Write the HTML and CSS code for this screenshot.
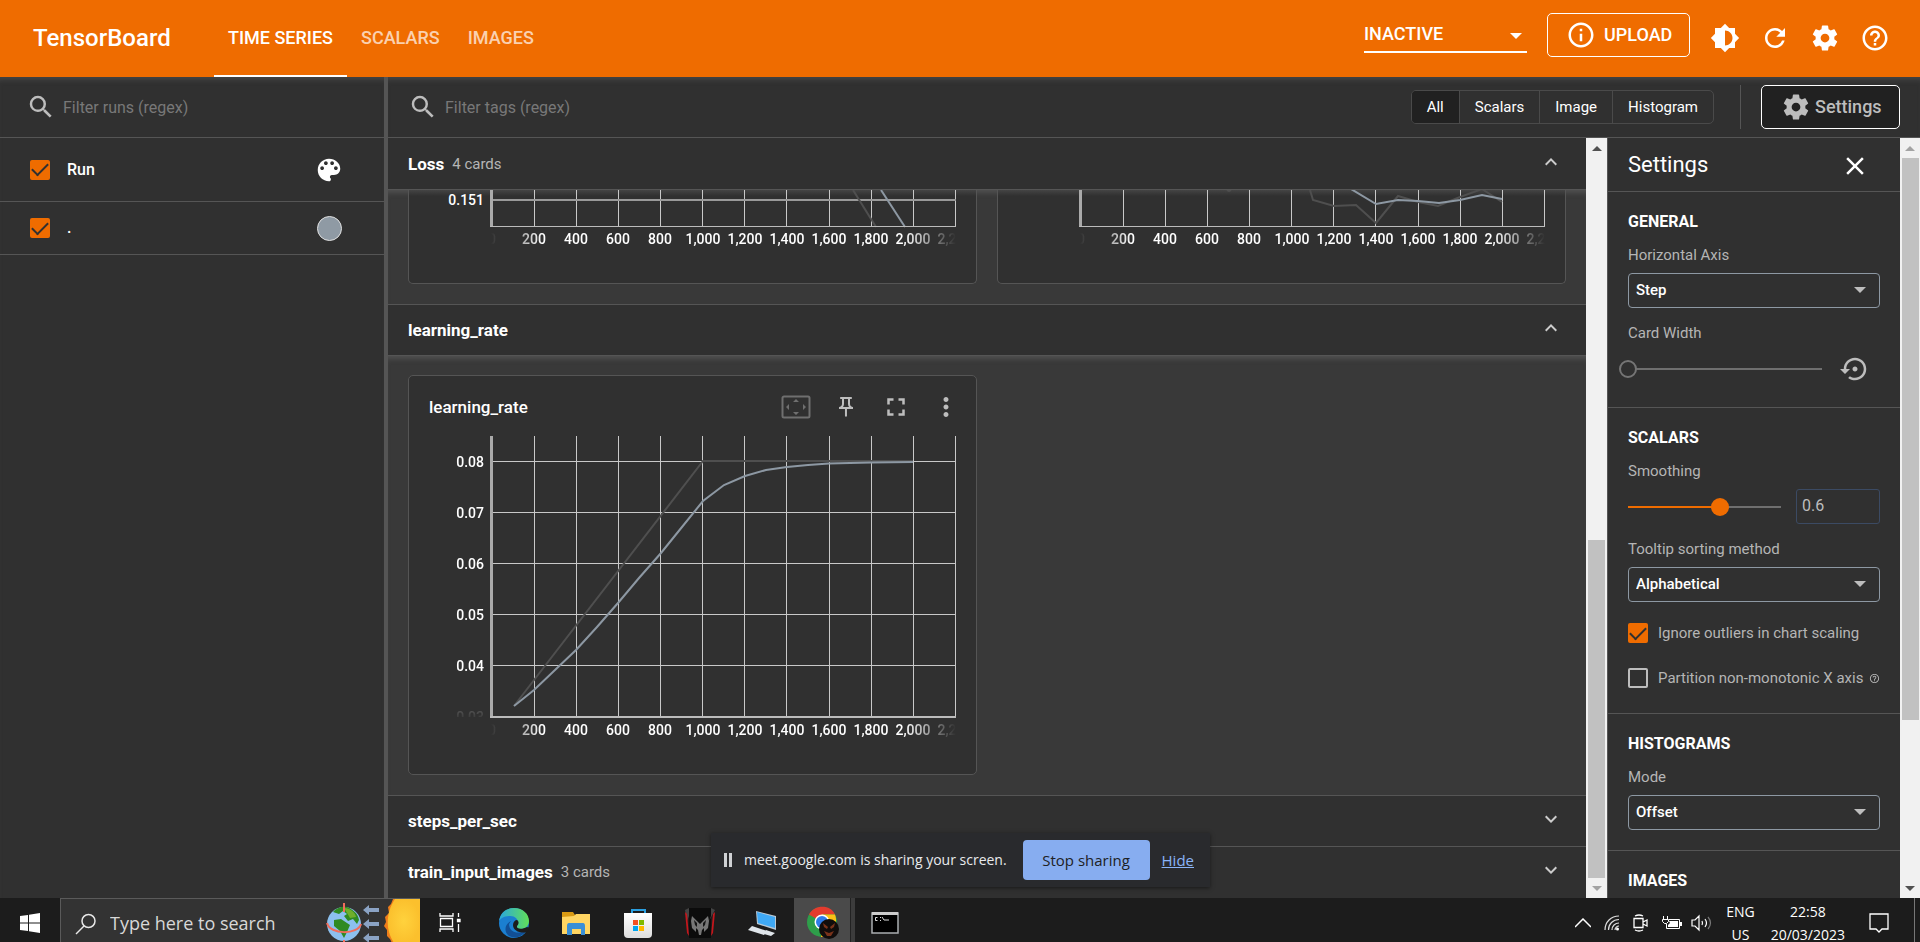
FILE: index.html
```html
<!DOCTYPE html>
<html lang="en">
<head>
<meta charset="utf-8">
<title>TensorBoard</title>
<link rel="stylesheet" href="styles.css">
</head>
<body>
<svg class="defs" width="0" height="0" aria-hidden="true">
  <defs>
    <linearGradient id="fade-x"><stop offset="0" stop-color="#000"/><stop offset=".11" stop-color="#fff"/><stop offset=".89" stop-color="#fff"/><stop offset="1" stop-color="#000"/></linearGradient>
    <linearGradient id="fade-y" x1="0" y1="0" x2="0" y2="1"><stop offset="0" stop-color="#fff"/><stop offset=".9" stop-color="#fff"/><stop offset="1" stop-color="#222"/></linearGradient>
    <mask id="mask-x" maskUnits="userSpaceOnUse" x="82" y="-20" width="465" height="30"><rect x="82" y="-20" width="465" height="30" fill="url(#fade-x)"/></mask>
    <mask id="mask-y" maskUnits="userSpaceOnUse" x="0" y="0" width="80" height="286"><rect x="0" y="0" width="80" height="286" fill="url(#fade-y)"/></mask>
    <linearGradient id="edge-a" x1="0" y1="0" x2="1" y2="0"><stop offset="0" stop-color="#2aa7de"/><stop offset="1" stop-color="#61df58"/></linearGradient>
    <linearGradient id="store-a" x1="0" y1="0" x2="0" y2="1"><stop offset="0" stop-color="#fff"/><stop offset="1" stop-color="#ddd"/></linearGradient>
    <radialGradient id="sun-a"><stop offset="0" stop-color="#ffd23d"/><stop offset="1" stop-color="#fbc02d"/></radialGradient>
    <symbol id="i-search" viewBox="0 0 24 24"><path d="M15.5 14h-.79l-.28-.27A6.47 6.47 0 0 0 16 9.5 6.5 6.5 0 1 0 9.5 16c1.61 0 3.09-.59 4.23-1.57l.27.28v.79l5 4.99L20.49 19l-4.99-5zm-6 0C7.01 14 5 11.99 5 9.5S7.01 5 9.5 5 14 7.01 14 9.5 11.99 14 9.5 14z"/></symbol>
    <symbol id="i-gear" viewBox="0 0 24 24"><path d="M19.43 12.98c.04-.32.07-.64.07-.98s-.03-.66-.07-.98l2.11-1.65c.19-.15.24-.42.12-.64l-2-3.46c-.12-.22-.39-.3-.61-.22l-2.49 1c-.52-.4-1.08-.73-1.69-.98l-.38-2.65C14.46 2.18 14.25 2 14 2h-4c-.25 0-.46.18-.49.42l-.38 2.65c-.61.25-1.17.59-1.69.98l-2.49-1c-.23-.09-.49 0-.61.22l-2 3.46c-.13.22-.07.49.12.64l2.11 1.65c-.04.32-.07.65-.07.98s.03.66.07.98l-2.11 1.65c-.19.15-.24.42-.12.64l2 3.46c.12.22.39.3.61.22l2.49-1c.52.4 1.08.73 1.69.98l.38 2.65c.03.24.24.42.49.42h4c.25 0 .46-.18.49-.42l.38-2.65c.61-.25 1.17-.59 1.69-.98l2.49 1c.23.09.49 0 .61-.22l2-3.46c.12-.22.07-.49-.12-.64l-2.11-1.65zM12 15.5c-1.93 0-3.5-1.57-3.5-3.5s1.57-3.5 3.5-3.5 3.5 1.57 3.5 3.5-1.57 3.5-3.5 3.5z"/></symbol>
    <symbol id="i-help" viewBox="0 0 24 24"><path d="M11 18h2v-2h-2v2zm1-16C6.48 2 2 6.48 2 12s4.48 10 10 10 10-4.48 10-10S17.52 2 12 2zm0 18c-4.41 0-8-3.59-8-8s3.59-8 8-8 8 3.59 8 8-3.59 8-8 8zm0-14c-2.21 0-4 1.79-4 4h2c0-1.1.9-2 2-2s2 .9 2 2c0 2-3 1.75-3 5h2c0-2.25 3-2.5 3-5 0-2.21-1.79-4-4-4z"/></symbol>
    <symbol id="i-up" viewBox="0 0 24 24"><path d="M12 8l-6 6 1.41 1.41L12 10.83l4.59 4.58L18 14z"/></symbol>
    <symbol id="i-down" viewBox="0 0 24 24"><path d="M16.59 8.59L12 13.17 7.41 8.59 6 10l6 6 6-6z"/></symbol>
  </defs>
</svg>

<header class="topbar">
  <h1 class="brand">TensorBoard</h1>
  <nav class="tabs">
    <button class="tab tab-active">TIME SERIES</button>
    <button class="tab">SCALARS</button>
    <button class="tab">IMAGES</button>
  </nav>
  <div class="top-actions">
    <span class="inactive"><select aria-label="Inactive dashboards"><option>INACTIVE</option></select></span>
    <button class="upload">
      <svg class="icon-30" viewBox="0 0 24 24"><path d="M11 7h2v2h-2zm0 4h2v6h-2zm1-9C6.48 2 2 6.48 2 12s4.48 10 10 10 10-4.48 10-10S17.52 2 12 2zm0 18c-4.41 0-8-3.59-8-8s3.59-8 8-8 8 3.59 8 8-3.59 8-8 8z"/></svg>
      UPLOAD
    </button>
    <div class="top-icons">
      <button aria-label="Theme"><svg class="icon-30" viewBox="0 0 24 24"><path d="M20 15.31L23.31 12 20 8.69V4h-4.69L12 .69 8.69 4H4v4.69L.69 12 4 15.31V20h4.69L12 23.31 15.31 20H20v-4.69zM12 18V6c3.31 0 6 2.69 6 6s-2.69 6-6 6z"/></svg></button>
      <button aria-label="Refresh"><svg class="icon-30" viewBox="0 0 24 24"><path d="M17.65 6.35A7.958 7.958 0 0 0 12 4c-4.42 0-7.99 3.58-8 8s3.57 8 8 8c3.73 0 6.84-2.55 7.73-6h-2.08A5.99 5.99 0 0 1 12 18c-3.31 0-6-2.69-6-6s2.69-6 6-6c1.66 0 3.14.69 4.22 1.78L13 11h7V4l-2.35 2.35z"/></svg></button>
      <button aria-label="Settings"><svg class="icon-30"><use href="#i-gear"/></svg></button>
      <button aria-label="Help"><svg class="icon-30"><use href="#i-help"/></svg></button>
    </div>
  </div>
</header>

<div class="workspace">
  <aside class="runs">
    <label class="filter"><svg class="icon-30"><use href="#i-search"/></svg><input type="text" placeholder="Filter runs (regex)"></label>
    <div class="run-row run-head">
      <input type="checkbox" id="run-all" checked><label for="run-all">Run</label>
      <button aria-label="Color runs"><svg class="icon-30" viewBox="0 0 24 24"><path d="M12 3c-4.97 0-9 4.03-9 9s4.03 9 9 9c.83 0 1.5-.67 1.5-1.5 0-.39-.15-.74-.39-1.01-.23-.26-.38-.61-.38-.99 0-.83.67-1.5 1.5-1.5H16c2.76 0 5-2.24 5-5 0-4.42-4.03-8-9-8zm-5.5 9c-.83 0-1.5-.67-1.5-1.5S5.67 9 6.5 9 8 9.67 8 10.5 7.33 12 6.5 12zm3-4C8.67 8 8 7.33 8 6.5S8.67 5 9.5 5s1.5.67 1.5 1.5S10.33 8 9.5 8zm5 0c-.83 0-1.5-.67-1.5-1.5S13.67 5 14.5 5s1.5.67 1.5 1.5S15.33 8 14.5 8zm3 4c-.83 0-1.5-.67-1.5-1.5S16.67 9 17.5 9s1.5.67 1.5 1.5-.67 1.5-1.5 1.5z"/></svg></button>
    </div>
    <div class="run-row">
      <input type="checkbox" id="run-dot" checked><label for="run-dot">.</label>
      <button class="swatch" aria-label="Run color"></button>
    </div>
  </aside>

  <main class="main">
    <div class="toolbar">
      <label class="filter"><svg class="icon-30"><use href="#i-search"/></svg><input type="text" placeholder="Filter tags (regex)"></label>
      <div class="toggle">
        <button class="on">All</button><button>Scalars</button><button>Image</button><button>Histogram</button>
      </div>
      <div class="settings-slot"><button class="settings-btn"><svg class="icon-30"><use href="#i-gear"/></svg>Settings</button></div>
    </div>

    <div class="columns">
      <div class="groups">
        <section>
          <button class="group-head first"><strong>Loss</strong><small>4 cards</small><svg class="icon-24"><use href="#i-up"/></svg></button>
          <div class="group-body cropped">
            <article class="card">
              <svg class="chart" viewBox="0 0 567 93">
                <path class="grid" d="M125.500 0V37M167.500 0V37M209.500 0V37M251.500 0V37M293.500 0V37M335.500 0V37M377.500 0V37M420.500 0V37M462.500 0V37M504.500 0V37M546.500 0V37"/>
                <path class="grid-wide" d="M82 10H547"/>
                <path class="raw" d="M444 0L467 37"/><path class="smooth" d="M472 0L496 37"/>
                <path class="axis-y" d="M82.500 0V37"/><path class="axis-x" d="M81 36.500H547"/>
                <text class="tick end" x="75" y="15">0.151</text>
                <g transform="translate(0 54)"><g class="xticks" mask="url(#mask-x)"><text x="83" y="0">0</text><text x="125" y="0">200</text><text x="167" y="0">400</text><text x="209" y="0">600</text><text x="251" y="0">800</text><text x="294" y="0">1,000</text><text x="336" y="0">1,200</text><text x="378" y="0">1,400</text><text x="420" y="0">1,600</text><text x="462" y="0">1,800</text><text x="504" y="0">2,000</text><text x="546" y="0">2,200</text></g></g>
              </svg>
            </article>
            <article class="card">
              <svg class="chart" viewBox="0 0 567 93">
                <path class="grid" d="M125.500 0V37M167.500 0V37M209.500 0V37M251.500 0V37M293.500 0V37M335.500 0V37M377.500 0V37M420.500 0V37M462.500 0V37M504.500 0V37M546.500 0V37"/>
                <path class="raw" d="M312 0L315 10L336 16L358 15L378 33L400 6L420 12L440 16L462 7L484 -1L504 12M229 0L231 1L233 0"/><path class="smooth" d="M353 -1L378 14L400 10L420 11L441 13L462 10L484 5L504 9"/>
                <path class="axis-y" d="M82.500 0V37"/><path class="axis-x" d="M81 36.500H547"/>
                <g transform="translate(0 54)"><g class="xticks" mask="url(#mask-x)"><text x="83" y="0">0</text><text x="125" y="0">200</text><text x="167" y="0">400</text><text x="209" y="0">600</text><text x="251" y="0">800</text><text x="294" y="0">1,000</text><text x="336" y="0">1,200</text><text x="378" y="0">1,400</text><text x="420" y="0">1,600</text><text x="462" y="0">1,800</text><text x="504" y="0">2,000</text><text x="546" y="0">2,200</text></g></g>
              </svg>
            </article>
          </div>
        </section>

        <section>
          <button class="group-head"><strong>learning_rate</strong><svg class="icon-24"><use href="#i-up"/></svg></button>
          <div class="group-body">
            <article class="card">
              <div class="card-head">
                <h2>learning_rate</h2>
                <button class="dim" aria-label="Fit domain"><svg class="icon-30" viewBox="0 0 30 30"><path fill="none" stroke="currentColor" stroke-width="2" d="M3 4.500h24a1.500 1.500 0 0 1 1.500 1.500v18a1.500 1.500 0 0 1-1.500 1.500H3A1.500 1.500 0 0 1 1.500 24V6A1.500 1.500 0 0 1 3 4.500z"/><path d="M15 7l3 3h-6zM15 23l3-3h-6zM5 15l3-3v6zM25 15l-3-3v6z"/></svg></button>
                <button aria-label="Pin card"><svg class="icon-24" viewBox="0 0 24 24"><path d="M14 4v5c0 1.12.37 2.160 1 3H9c.65-.86 1-1.900 1-3V4h4m3-2H7c-.55 0-1 .45-1 1s.45 1 1 1h1v5c0 1.660-1.340 3-3 3v2h5.970v7l1 1 1-1v-7H19v-2c-1.660 0-3-1.340-3-3V4h1c.55 0 1-.45 1-1s-.45-1-1-1z"/></svg></button>
                <button aria-label="Fullscreen"><svg class="icon-30" viewBox="0 0 24 24"><path d="M7 14H5v5h5v-2H7v-3zm-2-4h2V7h3V5H5v5zm12 7h-3v2h5v-5h-2v3zM14 5v2h3v3h2V5h-5z"/></svg></button>
                <button aria-label="More"><svg class="icon-30" viewBox="0 0 24 24"><path d="M12 8c1.100 0 2-.9 2-2s-.9-2-2-2-2 .9-2 2 .9 2 2 2zm0 2c-1.100 0-2 .9-2 2s.9 2 2 2 2-.9 2-2-.9-2-2-2zm0 6c-1.100 0-2 .9-2 2s.9 2 2 2 2-.9 2-2-.9-2-2-2z"/></svg></button>
              </div>
              <svg class="chart" viewBox="0 0 567 343">
                <path class="grid" d="M125.500 5V286M167.500 5V286M209.500 5V286M251.500 5V286M293.500 5V286M335.500 5V286M377.500 5V286M420.500 5V286M462.500 5V286M504.500 5V286M546.500 5V286M82 30.500H547M82 81.500H547M82 132.500H547M82 183.500H547M82 234.500H547"/>
                <path class="raw" d="M105 275L294 30L504 30"/>
                <path class="smooth" d="M105 275L125 259L146 239L167 219L188 196L209 172L230 147L252 122L273 96L294 70L315 54L336 45L357 39L378 36L399 34L420 32.500L462 31.500L504 31"/>
                <path class="axis-y" d="M82.500 5V287"/><path class="axis-x wide" d="M81 286H547"/>
                <g class="yticks" mask="url(#mask-y)"><text x="75" y="36">0.08</text><text x="75" y="87">0.07</text><text x="75" y="138">0.06</text><text x="75" y="189">0.05</text><text x="75" y="240">0.04</text><text x="75" y="291" opacity=".5">0.03</text></g>
                <g transform="translate(0 304)"><g class="xticks" mask="url(#mask-x)"><text x="83" y="0">0</text><text x="125" y="0">200</text><text x="167" y="0">400</text><text x="209" y="0">600</text><text x="251" y="0">800</text><text x="294" y="0">1,000</text><text x="336" y="0">1,200</text><text x="378" y="0">1,400</text><text x="420" y="0">1,600</text><text x="462" y="0">1,800</text><text x="504" y="0">2,000</text><text x="546" y="0">2,200</text></g></g>
              </svg>
            </article>
          </div>
        </section>

        <button class="group-head"><strong>steps_per_sec</strong><svg class="icon-24"><use href="#i-down"/></svg></button>
        <button class="group-head"><strong>train_input_images</strong><small>3 cards</small><svg class="icon-24"><use href="#i-down"/></svg></button>
      </div>
      <div class="scrollbar"><i class="arrow up"></i><i class="gap-top-main"></i><i class="thumb thumb-main"></i><i class="arrow down faint"></i></div>

      <aside class="settings">
        <div class="settings-head"><h2>Settings</h2><button aria-label="Close"><svg class="icon-30" viewBox="0 0 24 24"><path d="M19 6.410L17.590 5 12 10.590 6.410 5 5 6.410 10.590 12 5 17.590 6.410 19 12 13.410 17.590 19 19 17.590 13.410 12z"/></svg></button></div>
        <section class="set-block">
          <h3>GENERAL</h3>
          <label class="name" for="haxis">Horizontal Axis</label>
          <span class="select"><select id="haxis"><option>Step</option></select></span>
          <label class="name" for="cwidth">Card Width</label>
          <div class="slider-row"><input class="range empty" id="cwidth" type="range" min="0" max="100" value="0">
            <button aria-label="Reset width"><svg class="icon-30" viewBox="0 0 24 24"><path d="M14 12c0-1.100-.9-2-2-2s-2 .9-2 2 .9 2 2 2 2-.9 2-2zm-2-9c-4.970 0-9 4.030-9 9H0l4 4 4-4H5c0-3.870 3.130-7 7-7s7 3.130 7 7-3.130 7-7 7c-1.510 0-2.910-.49-4.060-1.300l-1.420 1.440C8.040 20.300 9.940 21 12 21c4.970 0 9-4.030 9-9s-4.030-9-9-9z"/></svg></button></div>
        </section>
        <section class="set-block">
          <h3>SCALARS</h3>
          <label class="name" for="smooth">Smoothing</label>
          <div class="smooth-row"><input class="range" id="smooth" type="range" min="0" max="1" step="0.1" value="0.6"><input class="num" type="text" value="0.6" aria-label="Smoothing value"></div>
          <label class="name" for="sorting">Tooltip sorting method</label>
          <span class="select"><select id="sorting"><option>Alphabetical</option></select></span>
          <div class="check-row"><input type="checkbox" id="outliers" checked><label for="outliers">Ignore outliers in chart scaling</label></div>
          <div class="check-row"><input type="checkbox" id="partition"><label for="partition">Partition non-monotonic X axis</label><svg class="icon-11"><use href="#i-help"/></svg></div>
        </section>
        <section class="set-block">
          <h3>HISTOGRAMS</h3>
          <label class="name" for="mode">Mode</label>
          <span class="select"><select id="mode"><option>Offset</option></select></span>
        </section>
        <section class="set-block"><h3>IMAGES</h3></section>
      </aside>
      <div class="scrollbar"><i class="arrow up faint"></i><i class="thumb thumb-settings"></i><i class="gap-bottom"></i><i class="arrow down"></i></div>
    </div>
  </main>
</div>

<div class="share">
  <i class="pause"></i><span>meet.google.com is sharing your screen.</span>
  <button>Stop sharing</button><a href="#">Hide</a>
</div>

<footer class="taskbar">
  <button class="start" aria-label="Start"><svg width="20" height="20" viewBox="0 0 20 20"><path fill="#fff" d="M0 3l8-1v7.500H0zM9 1.800L20 0v9.500H9zM0 10.500h8V18l-8-1zM9 10.500h11V20L9 18.200z"/></svg></button>
  <div class="win-search">
    <svg width="22" height="22" viewBox="0 0 22 22" fill="none" stroke="#e8e8e8" stroke-width="1.500"><circle cx="13.500" cy="8" r="6.500"/><path d="M9 13L1 21"/></svg>
    <input type="text" placeholder="Type here to search" aria-label="Type here to search">
    <svg class="weather" width="96" height="44" viewBox="0 0 96 44"><circle cx="20" cy="25" r="17" fill="#8cc0ee"/><path fill="#2f8a22" d="M9 13c3-4 9-6 14-5 5 2 11 6 12 13l-2 4-4-5-5 2-4-5 3-2-4-3-4 3zM10 21l7-1 9 6-3 7-3 6-4-7-6-5z"/><path fill="#6fae2b" d="M20 9c6 0 11 4 12 9l-6 1-3-5z"/><path fill="none" stroke="#f26d5b" stroke-width="2" d="M20 4v9M20 41v3M3 24c3 12 31 12 34 1"/><path fill="#8ba3c4" d="M39 11l6-5v3h10v4H45v3zM39 25l6-5v3h10v4H45v3zM39 39l6-5v3h10v4H45v3z"/><path fill="#ef7d1a" d="M69 0l-2 5-3 3 1 6-4 4 1 5-2 4 3 4v6l3 3 2 4h28V0z"/><path fill="url(#sun-a)" d="M71 0c-9 13-10 31-1 44h26V0z"/></svg>
  </div>
  <div class="apps">
    <button aria-label="Task view"><svg width="24" height="22" viewBox="0 0 24 22" fill="none" stroke="#fff" stroke-width="1.300"><path d="M2 1v3h13V1M2 20v-3h13v3M2.500 6.500h12v8h-12zM20.500 1v4M20.500 12v8"/><path fill="#fff" d="M19.500 7.500h2.500v2h-2.500z"/></svg></button>
    <button aria-label="Edge"><svg width="32" height="32" viewBox="0 0 32 32"><circle cx="16" cy="16" r="15" fill="#1b7fd0"/><path fill="url(#edge-a)" d="M1 14C2 6 8 1 16 1c9 0 15 6 15 13 0 5-4 8-8 8-3 0-5-1-4-3 3-5-1-11-8-10-5 0-9 3-10 5z"/><path fill="#124f96" d="M11 17c0 7 7 11 17 7-4 6-11 8-17 5-5-4-5-11 2-15z"/><path fill="#1c1c1c" d="M19 13c3 2 1 5 0 6-1 3 5 4 10 1l3 1-3 4c-6 2-14-1-14-7 0-3 2-5 4-5z"/></svg></button>
    <button aria-label="File Explorer"><svg width="28" height="24" viewBox="0 0 28 24"><path fill="#d99a13" d="M0 1h11l2 3v5H0z"/><path fill="#ffd562" d="M0 6l12-1 2-2h14v20H0z"/><path fill="#3a8fd6" d="M7 12h14q2 0 2 3v9h-4v-6h-9v6H5v-9q0-3 2-3z"/></svg></button>
    <button aria-label="Store"><svg width="30" height="30" viewBox="0 0 30 30"><path fill="none" stroke="#2a9fe0" stroke-width="2" d="M9 7V2h13v5"/><path fill="url(#store-a)" d="M1 5h28v21q0 4-4 4H5q-4 0-4-4z"/><path fill="#f25022" d="M10 12h5v5h-5z"/><path fill="#7fba00" d="M16 12h5v5h-5z"/><path fill="#00a4ef" d="M10 18h5v5h-5z"/><path fill="#ffb900" d="M16 18h5v5h-5z"/></svg></button>
    <button aria-label="PredatorSense"><svg width="30" height="30" viewBox="0 0 30 30"><path fill="#0c0c0c" d="M4 0h22v30H4z"/><path fill="#444" d="M0 2l4-2v8l-2 5zM30 2l-4-2v8l-2 5z"/><path fill="#c4161c" d="M0 4l2 2 2 22-2-3zM30 4l-2 2-2 22 2-3z"/><path fill="#777" d="M7 8l5 5 3 3 3-3 5-5 1 5-1 7-4 4v-4l-2 2-1 5h-2l-1-5-2-2v4l-4-4-1-7z"/><path fill="#151515" d="M9 12l3 3v4l-2-2zM21 12l-3 3v4l2-2z"/></svg></button>
    <button aria-label="Remote desktop"><svg width="28" height="28" viewBox="0 0 28 28"><path fill="#b9c8d4" d="M8 2l20 5v14L9 15z"/><path fill="#3fa9f5" d="M9 3l18 5v11L10 14z"/><path fill="#dfe5ea" d="M4 17l15 5-3 4L0 21zM18 21l9 3-4 3-7-2z"/></svg></button>
    <button class="active" aria-label="Chrome"><svg width="34" height="34" viewBox="0 0 34 34"><circle cx="17" cy="16" r="15" fill="#2e9e4a"/><path fill="#e33b2e" d="M17 16L4 8.500C9-2 26-2 30 8.500H17z"/><path fill="#fbc116" d="M17 8.500h13c4 11-4 23-14 22.500z"/><circle cx="17" cy="16" r="7.500" fill="#fff"/><circle cx="17" cy="16" r="6" fill="#2f7de9"/><circle cx="24" cy="23" r="10" fill="#110d0c"/><path fill="#7a331a" d="M18 17l5 4-1 2-3-2zM30 17l-5 4 1 2 3-2zM19 25l5 2 5-2-3 5h-4z"/></svg></button>
    <button class="stack" aria-label="Chrome windows"></button>
    <button aria-label="Command Prompt"><svg width="28" height="24" viewBox="0 0 28 24"><path fill="#000" stroke="#a9adb0" stroke-width="1.500" d="M1 2h26v20H1z"/><path fill="#ccc" d="M1 1h26v3H1z"/><path fill="none" stroke="#ddd" d="M6.500 6.500h-2v3h2M9.500 6v1M9.500 9v1M11 6l2 3h5"/></svg></button>
  </div>
  <div class="tray">
    <svg width="16" height="10" viewBox="0 0 16 10" fill="none" stroke="#fff" stroke-width="1.500"><path d="M0 9l8-8 8 8"/></svg>
    <svg width="16" height="16" viewBox="0 0 16 16" fill="none" stroke="#ddd" stroke-width="1.200"><path d="M1 15C1 7 7 1 15 1M4.500 15C4.500 9 9 4.500 15 4.500M8 15c0-4 3-7 7-7M11 15c0-2 2-4 4-4"/><circle cx="13.500" cy="14" r="1.500" fill="#fff" stroke="none"/></svg>
    <svg width="16" height="18" viewBox="0 0 16 18" fill="none" stroke="#fff" stroke-width="1.300"><path d="M1 4.500h9v9H1zM10 8l4-2v6l-4-2M2 2q4-2 8 0M2 16q4 2 8 0"/></svg>
    <svg width="20" height="14" viewBox="0 0 20 14"><path fill="none" stroke="#fff" d="M4.500 8v4.500h13v-9H7M1.500 0v3M5.500 0v3M0.500 3.500h6v2l-2 2h-2l-2-2z"/><path fill="#fff" d="M7 5h9v6H6V9l2-2zM18 6h2v4h-2z"/></svg>
    <svg class="speaker" width="22" height="18" viewBox="0 0 22 18" fill="none" stroke="#fff" stroke-width="1.200"><path d="M1 6h3l4-4v14l-4-4H1zM11 7q1 2 0 4M14 5q3 4 0 8"/><path stroke="#777" d="M17 3q5 6 0 12"/></svg>
    <div class="lang"><span>ENG</span><span>US</span></div>
    <div class="clock"><span>22:58</span><span>20/03/2023</span></div>
    <svg width="20" height="21" viewBox="0 0 20 21" fill="none" stroke="#fff" stroke-width="1.300"><path d="M1 1h18v15h-6l-3 3-3-3H1z"/></svg>
  </div>
</footer>
</body>
</html>
```
FILE: styles.css
```css
* { box-sizing: border-box; }
body {
  margin: 0;
  height: 100vh;
  display: flex;
  flex-direction: column;
  overflow: hidden;
  background: #303030;
  color: #fff;
  font: 400 15px/20px Roboto, sans-serif;
}
button, input, select { font: inherit; color: inherit; }
button { margin: 0; padding: 0; border: 0; background: none; display: flex; align-items: center; }
h1, h2, h3 { margin: 0; }
svg { display: block; flex: none; }
svg:not([fill]) { fill: currentColor; }
.defs { position: absolute; }
.icon-30 { width: 30px; height: 30px; }
.icon-24 { width: 24px; height: 24px; }
.icon-11 { width: 11px; height: 11px; }

/* top bar */
.topbar { flex: none; height: 77px; display: flex; align-items: stretch; background: #ef6c00; padding: 0 30px 0 33px; }
.brand { align-self: center; width: 181px; padding-bottom: 2px; font-size: 24px; font-weight: 500; line-height: 30px; }
.tabs { display: flex; }
.tab { padding: 0 14px; font-size: 18px; font-weight: 500; color: rgba(255,255,255,.7); border-bottom: 2px solid transparent; }
.tab-active { color: #fff; border-color: #fff; }
.top-actions { margin-left: auto; display: flex; align-items: flex-start; padding-top: 13px; }
.inactive { position: relative; width: 163px; height: 40px; margin-right: 20px; border-bottom: 2px solid #fff; }
.inactive select { display: block; width: 100%; height: 38px; padding: 3px 0 0; border: 0; background: none; appearance: none; font-size: 18px; line-height: 24px; font-weight: 500; }
.inactive::after { content: ""; position: absolute; right: 5px; top: 20px; border: 6px solid transparent; border-top-color: #fff; border-bottom: 0; }
.upload { height: 44px; width: 143px; padding-left: 18px; gap: 8px; border: 1px solid #fff; border-radius: 5px; font-size: 18px; font-weight: 500; }
.top-icons { display: flex; gap: 20px; padding: 10px 0 0 20px; }

/* runs */
.workspace { flex: 1; min-height: 0; display: flex; }
.runs { flex: none; width: 388px; border-right: 4px solid #555; box-shadow: inset 0 6px 5px -3px #444; }
.filter { height: 61px; display: flex; align-items: center; gap: 7px; padding-left: 26px; color: #bdbdbd; }
.filter input { flex: 1; min-width: 0; border: 0; padding: 2px 0 0; background: none; outline: 0; font-size: 16px; }
.filter input::placeholder { color: #787878; }
.runs > .filter { border-bottom: 1px solid #555; }
.run-row { height: 53px; display: flex; align-items: center; padding: 0 42px 0 30px; gap: 17px; border-bottom: 1px solid #555; font-size: 16px; font-weight: 500; }
.run-head { height: 64px; padding-right: 40px; }
.run-row label { flex: 1; }
.swatch { width: 25px; height: 25px; border-radius: 50%; background: #8f9aa4; border: 1px solid #e0e0e0; }
input[type=checkbox] { appearance: none; flex: none; width: 20px; height: 20px; margin: 0; border: 2px solid #bdbdbd; border-radius: 2px; }
input[type=checkbox]:checked { border: 0; background: #ef6c00; display: grid; place-items: center; }
input[type=checkbox]:checked::after { content: ""; width: 14px; height: 7px; border: solid #303030; border-width: 0 0 2px 2px; transform: translateY(-2px) rotate(-45deg); }

/* toolbar */
.main { flex: 1; min-width: 0; display: flex; flex-direction: column; }
.toolbar { flex: none; height: 61px; display: flex; align-items: center; padding-right: 20px; border-bottom: 1px solid #555; box-shadow: inset 0 6px 5px -3px #444; }
.toolbar .filter { flex: 1; padding-left: 20px; }
.toggle { display: flex; border: 1px solid #4a4a4a; border-radius: 5px; overflow: hidden; }
.toggle button { height: 32px; padding: 0 15px; border-left: 1px solid #4a4a4a; }
.toggle button:first-child { border-left: 0; }
.toggle .on { background: #212121; }
.settings-slot { margin-left: 26px; padding-left: 20px; border-left: 1px solid #555; }
.settings-btn { width: 139px; height: 44px; padding-left: 19px; gap: 4px; background: #212121; border: 1px solid #fff; border-radius: 5px; color: #bdbdbd; font-size: 18px; font-weight: 500; }

/* groups */
.columns { flex: 1; min-height: 0; display: flex; }
.groups { flex: 1; min-width: 0; overflow: hidden; background: #303030; }
.group-head { width: 100%; height: 51px; padding: 0 23px 0 20px; border-top: 1px solid #555; gap: 8px; }
.group-head.first { border-top: 0; }
.group-head strong { font-size: 17px; font-weight: 700; }
.group-head small { font-size: 15px; color: #b5b5b5; }
.group-head svg { margin-left: auto; margin-bottom: 4px; color: #ccc; }
.group-body { display: grid; grid-template-columns: 1fr 1fr; gap: 20px; padding: 20px; background: #393939; border-top: 1px solid #555; box-shadow: inset 0 6px 5px -3px #505050; }
.group-body:not(.cropped) { padding-top: 19px; }
.cropped { padding-top: 0; }
.cropped .card { border-top: 0; border-radius: 0 0 5px 5px; background: linear-gradient(#444, #303030 6px); }
.card { background: #303030; border: 1px solid #555; border-radius: 5px; }
.card-head { display: flex; align-items: center; height: 55px; padding: 6px 15px 0 20px; gap: 20px; color: #bdbdbd; }
.card-head h2 { flex: 1; font-size: 17px; font-weight: 500; color: #fff; }
.card-head button { width: 30px; justify-content: center; }
.card-head .dim { color: #6f6f6f; }
.chart { width: 100%; height: auto; }
.chart path { fill: none; }
.grid { stroke: #c8c8c8; }
.grid-wide { stroke: #999; stroke-width: 2; }
.axis-y { stroke: #aaa; stroke-width: 3; }
.axis-x { stroke: #bbb; }
.axis-x.wide { stroke-width: 2; }
.raw { stroke: #4f4f4f; stroke-width: 2; }
.smooth { stroke: #8d98a3; stroke-width: 2; }
.tick, .xticks, .yticks { fill: #fff; font-size: 14px; font-weight: 500; }
.xticks { text-anchor: middle; }
.tick, .yticks { text-anchor: end; }

/* scroll bars */
.scrollbar { flex: none; width: 21px; display: flex; flex-direction: column; align-items: center; background: #f1f1f1; }
.scrollbar:last-child { width: 20px; }
.arrow { flex: none; height: 20px; display: grid; place-items: center; }
.arrow::after { content: ""; border: 5px solid transparent; }
.arrow.up::after { border-top: 0; border-bottom-color: #505050; }
.arrow.down::after { border-bottom: 0; border-top-color: #505050; }
.arrow.up.faint::after { border-bottom-color: #a3a3a3; }
.arrow.down.faint::after { border-top-color: #a3a3a3; }
.thumb { width: 17px; background: #c1c1c1; }
.gap-top-main { flex: 382; }
.thumb-main { flex: 338; }
.thumb-settings { flex: 562; }
.gap-bottom { flex: 158; }

/* settings */
.settings { flex: none; width: 293px; overflow: hidden; border-left: 1px solid #555; }
.settings-head { height: 54px; display: flex; align-items: center; justify-content: space-between; padding: 2px 30px 0 20px; border-bottom: 1px solid #555; }
.settings-head h2 { padding-bottom: 2px; font-size: 22px; font-weight: 400; line-height: 28px; }
.set-block { padding: 20px; border-bottom: 1px solid #555; display: flex; flex-direction: column; }
.set-block h3 { font-size: 16px; font-weight: 700; line-height: 20px; padding-bottom: 13px; }
.name { color: #b5b5b5; padding-bottom: 8px; }
.select { position: relative; margin-bottom: 15px; }
.select select { display: block; width: 100%; height: 35px; padding: 0 7px 2px; border: 1px solid #8d98a3; border-radius: 4px; background: none; appearance: none; font-weight: 500; }
.select::after { content: ""; position: absolute; right: 14px; top: 14px; border: 6px solid transparent; border-top-color: #bdbdbd; border-bottom: 0; }
.select:last-child { margin-bottom: 0; }
.slider-row { height: 35px; margin-bottom: 1px; display: flex; align-items: center; gap: 18px; color: #bdbdbd; }
.smooth-row { display: flex; align-items: center; gap: 15px; margin-bottom: 15px; color: #bdbdbd; }
.range { appearance: none; flex: 1; min-width: 0; height: 18px; margin: 0 -9px; background: linear-gradient(90deg, #ef6c00 60%, #6f6f6f 60%) center / calc(100% - 18px) 2px no-repeat; }
.range::-webkit-slider-thumb { appearance: none; width: 18px; height: 18px; border-radius: 50%; background: #ef6c00; }
.range.empty { background: linear-gradient(#6f6f6f, #6f6f6f) center / calc(100% - 18px) 2px no-repeat; }
.range.empty::-webkit-slider-thumb { background: #303030; border: 2px solid #757575; }
.slider-row button { margin-right: 10px; }
.num { width: 84px; height: 35px; padding: 0 5px 3px; border: 1px solid #3b4a63; border-radius: 3px; background: none; font-size: 16px; }
.check-row { display: flex; align-items: center; gap: 10px; height: 20px; margin: 6px 0 19px; color: #b5b5b5; white-space: nowrap; }
.check-row:last-child { margin-bottom: 5px; }
.check-row svg { margin-left: -4px; }

/* share notice */
.share { position: absolute; left: 711px; bottom: 55px; height: 54px; width: 499px; padding: 0 16px 0 13px; display: flex; align-items: center; background: #292a2d; box-shadow: 0 1px 4px rgba(0,0,0,.5); color: #e8eaed; font: 15px/20px "Open Sans", sans-serif; white-space: nowrap; }
.pause { width: 8px; height: 14px; margin-right: 12px; border: solid #cfd1d4; border-width: 0 3px; }
.share span { flex: 1; font-size: 14px; }
.share button { height: 40px; width: 127px; margin-right: 12px; justify-content: center; border-radius: 4px; background: #87adf0; color: #202124; }
.share a { color: #8ab4f8; }

/* task bar */
.taskbar { flex: none; height: 44px; display: flex; background: #1c1c1c; font-family: "Open Sans", sans-serif; }
.start { width: 60px; justify-content: center; padding-top: 6px; }
.win-search { width: 360px; display: flex; align-items: center; background: #333; border: solid #5a5a5a; border-width: 1px 0 0 1px; padding-left: 14px; }
.win-search > svg:first-child { margin-top: 6px; }
.win-search input { flex: 1; min-width: 0; margin: 4px 0 0 13px; padding: 0; border: 0; background: none; font-size: 18px; line-height: 26px; }
.win-search input::placeholder { color: #d8d8d8; }
.apps { display: flex; }
.apps button { width: 62px; justify-content: center; padding-top: 6px; }
.apps button:first-child { margin-right: 3px; width: 60px; }
.apps .active { width: 56px; background: #4a4a4a; margin-left: 1px; }
.apps .stack { width: 5px; background: #3c3c3c; border-left: 1px solid #222; }
.apps button:last-child { width: 60px; }
.tray { margin-left: auto; display: flex; align-items: center; gap: 13px; padding: 6px 25px 0 0; margin-right: 5px; border-right: 1px solid #777; }
.speaker { margin-left: -4px; }
.lang, .clock { display: flex; flex-direction: column; align-items: center; font-size: 14px; line-height: 23px; }
.lang { margin-right: 3px; }
.clock { margin-right: 11px; }
```
